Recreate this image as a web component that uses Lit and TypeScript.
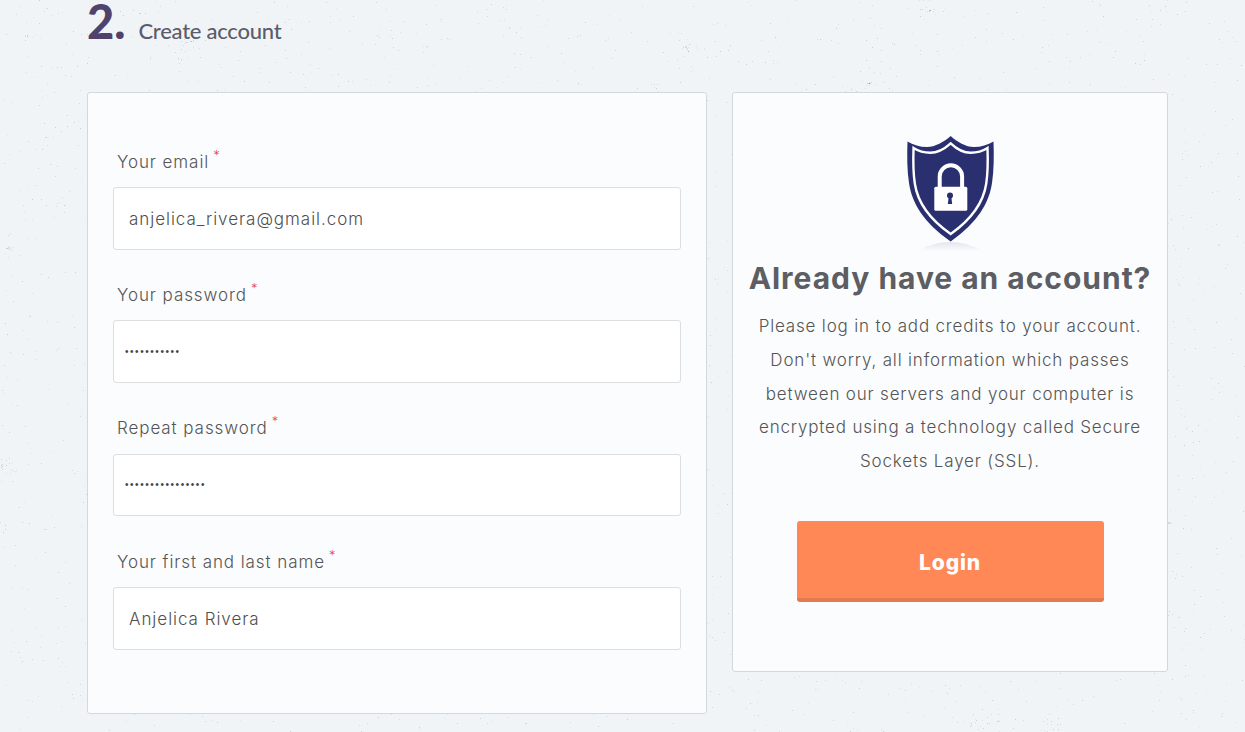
import { LitElement, html, css, svg } from "lit";
import { customElement } from "lit/decorators.js";

function specks() {
  let s = 12345;
  const r = () => ((s = (s * 16807) % 2147483647) / 2147483647);
  const out = [];
  const dot = (x: number, y: number) =>
    out.push(svg`<rect x=${x.toFixed(0)} y=${y.toFixed(0)} width="1" height="1" fill="#97a1ab" opacity=${(0.12 + r() * 0.33).toFixed(2)}></rect>`);
  for (let i = 0; i < 3000; i++) dot(r() * 1245, r() * 732);
  for (let c = 0; c < 70; c++) {
    const cx = r() * 1245;
    const cy = r() * 732;
    const n = 8 + r() * 25;
    for (let i = 0; i < n; i++) {
      const a = r() * 6.283;
      const d = r() * r() * 45;
      dot(cx + Math.cos(a) * d, cy + Math.sin(a) * d * 0.6);
    }
  }
  return out;
}

const FIELDS = [
  { label: "Your email", value: "anjelica_rivera@gmail.com", type: "text" },
  { label: "Your password", value: "***********", type: "password" },
  { label: "Repeat password", value: "****************", type: "password" },
  { label: "Your first and last name", value: "Anjelica Rivera", type: "text" },
];

const SHIELD = "M60.7 11 C54 17 45 22 37 22 C30 22 23 20 17.5 16.5 C17 30 17 45 19 58 C22 78 33 97 60.7 116.5 C88 97 99 78 102 58 C104 45 104 30 103.5 16.5 C98 20 91 22 84 22 C76 22 67 17 60.7 11Z";

@customElement("app-root")
export class AppRoot extends LitElement {
  static styles = css`
    :host {
      display: block;
      position: relative;
      width: 1245px;
      height: 732px;
      overflow: hidden;
      background: #f1f4f7;
      font-family: "Inter", "Liberation Sans", sans-serif;
      color: #5b5b5b;
    }
    .specks { position: absolute; inset: 0; }
    .page {
      position: relative;
      display: flex;
      flex-direction: column;
      padding: 0 0 0 87px;
    }
    .head {
      display: flex;
      align-items: baseline;
      height: 92px;
      box-sizing: border-box;
      gap: 13px;
    }
    .num {
      font: 900 47px/42px "Lato", sans-serif;
      color: #50426a;
    }
    .sub {
      font: 500 22px/24px "Lato", sans-serif;
      color: #5c5c6a;
      letter-spacing: -0.25px;
    }
    .cols { display: flex; gap: 25px; align-items: flex-start; }
    .card {
      background: #fbfcfe;
      border: 1px solid #d5d8da;
      border-radius: 3px;
      box-sizing: border-box;
    }
    .form {
      width: 620px;
      height: 622px;
      padding: 27.33px 25px 0;
      display: flex;
      flex-direction: column;
    }
    .field { height: 133.33px; display: flex; flex-direction: column; }
    .label {
      height: 66.67px;
      box-sizing: border-box;
      padding: 29.5px 0 0 4px;
      font-size: 17px;
      font-weight: 300;
      line-height: 24px;
      letter-spacing: 0.92px;
      color: #555;
      white-space: nowrap;
    }
    .label sup {
      color: #e2474c;
      font-size: 13px;
      line-height: 0;
      margin-left: 4px;
      vertical-align: 8px;
    }
    input {
      width: 568px;
      height: 62.67px;
      box-sizing: border-box;
      background: #fff;
      border: 1px solid #dcdedf;
      border-radius: 3px;
      padding: 2px 15px 0;
      font: 300 17px "Inter", sans-serif;
      letter-spacing: 0.96px;
      color: #4f4f4f;
      outline: none;
      margin: 0;
    }
    input.pw {
      padding: 0 11px;
      font: 10px "Liberation Sans", sans-serif;
      letter-spacing: 1.56px;
      color: #444;
    }
    .side {
      width: 436px;
      height: 580px;
      padding: 32px 12px 0;
      display: flex;
      flex-direction: column;
      align-items: center;
      text-align: center;
    }
    .shield { display: block; width: 120px; height: 135px; flex: none; }
    h2 {
      margin: 0;
      font-size: 30px;
      line-height: 36px;
      font-weight: 750;
      letter-spacing: 0.97px;
      color: #5c5e63;
      white-space: nowrap;
    }
    p {
      margin: 14px 0 0;
      font-size: 17px;
      font-weight: 300;
      line-height: 33.8px;
      letter-spacing: 0.82px;
      color: #555;
      width: 412px;
    }
    button {
      margin-top: 42px;
      width: 307px;
      height: 81px;
      border: 0;
      border-bottom: 4px solid #e27a50;
      border-radius: 3px;
      background: #ff8856;
      color: #fff;
      font: 800 21px "Inter", sans-serif;
      letter-spacing: 0.9px;
      padding: 7px 0 0;
    }
  `;

  render() {
    return html`
      <svg class="specks" width="1245" height="732" aria-hidden="true">${specks()}</svg>
      <div class="page">
        <div class="head">
          <span class="num">2.</span>
          <span class="sub">Create account</span>
        </div>
        <div class="cols">
          <div class="card form">
            ${FIELDS.map(
              (f) => html`
                <div class="field">
                  <div class="label">${f.label}<sup>*</sup></div>
                  <input class=${f.type === "password" ? "pw" : ""} type=${f.type} .value=${f.value} />
                </div>
              `
            )}
          </div>
          <div class="card side">
            <svg class="shield" viewBox="0 0 120 135" aria-hidden="true">
              <defs>
                <linearGradient id="glow" x1="0" y1="0" x2="0" y2="1">
                  <stop offset="0%" stop-color="#e3e5ea"></stop>
                  <stop offset="100%" stop-color="#fbfcfe"></stop>
                </linearGradient>
              </defs>
              <path d="M27 126 Q60 108 93 126Z" fill="url(#glow)"></path>
              <path d=${SHIELD} fill="#2a2f70"></path>
              <path d=${SHIELD} fill="#2a2f70" stroke="#fff" stroke-width="2.8" transform="translate(60.7 63) scale(.86) translate(-60.7 -63)"></path>
              <path d="M49.7 62 V51.5 a11.2 11.2 0 0 1 22.4 0 V62" fill="none" stroke="#fff" stroke-width="4"></path>
              <rect x="44.3" y="61.7" width="33" height="24" rx="1.5" fill="#fff"></rect>
              <circle cx="60" cy="70.5" r="3" fill="#2a2f70"></circle>
              <path d="M58.8 71 h2.4 l1 8 h-4.4z" fill="#2a2f70"></path>
            </svg>
            <h2>Already have an account?</h2>
            <p>Please log in to add credits to your account. Don't worry, all information which passes between our servers and your computer is encrypted using a technology called Secure Sockets Layer (SSL).</p>
            <button>Login</button>
          </div>
        </div>
      </div>
    `;
  }
}
